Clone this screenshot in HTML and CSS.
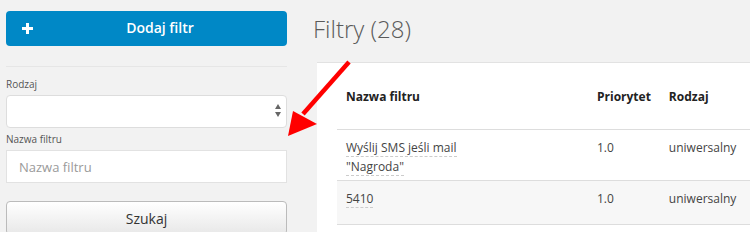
FILE: index.html
```html
<!DOCTYPE html>
<html lang="pl">
<head>
  <meta charset="UTF-8">
  <title>Filtry</title>
  <link rel="stylesheet" href="styles.css">
</head>
<body>
  <div class="page">
    <div class="sidebar">
      <button class="btn-add">
        <span class="plus"></span>
        <span class="btn-add-text">Dodaj filtr</span>
      </button>
      <div class="divider"></div>

      <label class="field-label">Rodzaj</label>
      <div class="select">
        <span class="select-arrows">
          <span class="arr-up"></span>
          <span class="arr-down"></span>
        </span>
      </div>

      <label class="field-label">Nazwa filtru</label>
      <input class="text-input" type="text" placeholder="Nazwa filtru">

      <button class="btn-search">Szukaj</button>
    </div>

    <div class="main">
      <h1 class="title">Filtry (28)</h1>
      <div class="panel">
        <table class="filters">
          <thead>
            <tr>
              <th class="col-name">Nazwa filtru</th>
              <th class="col-prio">Priorytet</th>
              <th>Rodzaj</th>
            </tr>
          </thead>
          <tbody>
            <tr class="row-a">
              <td><div class="name-wrap"><a class="flink">Wyślij SMS jeśli mail "Nagroda"</a></div></td>
              <td>1.0</td>
              <td>uniwersalny</td>
            </tr>
            <tr class="row-b">
              <td><div class="name-wrap"><a class="flink">5410</a></div></td>
              <td>1.0</td>
              <td>uniwersalny</td>
            </tr>
          </tbody>
        </table>
      </div>
    </div>
  </div>

  <svg class="arrow" width="80" height="90" viewBox="0 0 80 90">
    <line x1="70" y1="2" x2="24" y2="54" stroke="#ff0000" stroke-width="4.5"/>
    <polygon points="9,76 14,51 38,64" fill="#ff0000"/>
  </svg>
</body>
</html>
```

FILE: styles.css
```css
body{
  margin: 0;
  background-color: #f2f2f2;
  font-family: "Open Sans", "Liberation Sans", sans-serif;
  color: #333333;
  height: 232px;
  overflow: hidden;
  position: relative;
}

.page{
  display: flex;
}

.sidebar{
  width: 281px;
  padding-left: 6px;
  padding-top: 11px;
  display: flex;
  flex-direction: column;
}

.btn-add{
  height: 35px;
  border: none;
  border-radius: 4px;
  background-color: #0088c6;
  color: #ffffff;
  font-family: inherit;
  font-size: 14px;
  font-weight: 600;
  display: flex;
  align-items: center;
  padding: 0;
}

.plus{
  width: 11px;
  height: 11px;
  margin-left: 16px;
  position: relative;
}

.plus::before,
.plus::after{
  content: "";
  position: absolute;
  background-color: #ffffff;
}

.plus::before{
  left: 0;
  top: 4px;
  width: 11px;
  height: 3px;
}

.plus::after{
  left: 4px;
  top: 0;
  width: 3px;
  height: 11px;
}

.btn-add-text{
  flex: 1;
  text-align: center;
  padding-bottom: 2px;
}

.divider{
  height: 1px;
  background-color: #e6e6e6;
  margin-top: 20px;
  margin-bottom: 10px;
}

.field-label{
  font-size: 10px;
  color: #555555;
  line-height: 14px;
  margin-bottom: 4px;
}

.select{
  height: 31px;
  background-color: #ffffff;
  border: 1px solid #dddddd;
  border-radius: 4px;
  position: relative;
  margin-bottom: 4px;
}

.select-arrows{
  position: absolute;
  right: 5px;
  top: 8px;
  display: flex;
  flex-direction: column;
  gap: 3px;
}

.arr-up{
  width: 0;
  height: 0;
  border-left: 3.5px solid transparent;
  border-right: 3.5px solid transparent;
  border-bottom: 5px solid #666666;
}

.arr-down{
  width: 0;
  height: 0;
  border-left: 3.5px solid transparent;
  border-right: 3.5px solid transparent;
  border-top: 5px solid #666666;
}

.text-input{
  height: 33px;
  box-sizing: border-box;
  border: 1px solid #e2e2e2;
  background-color: #ffffff;
  padding: 0 12px;
  font-family: inherit;
  font-size: 13px;
  color: #333333;
}

.text-input::placeholder{
  color: #9a9a9a;
}

.btn-search{
  margin-top: 18px;
  height: 34px;
  border: 1px solid #bbbbbb;
  border-radius: 4px;
  background: linear-gradient(#ffffff, #e8e8e8);
  font-family: inherit;
  font-size: 14px;
  color: #333333;
  padding: 0;
}

.main{
  flex: 1;
  padding-left: 30px;
}

.title{
  margin: 0;
  margin-left: -4px;
  font-size: 24px;
  font-weight: 300;
  color: #5a5a5a;
  height: 62px;
  line-height: 58px;
}

.panel{
  background-color: #ffffff;
  border-top: 1px solid #e2e2e2;
  padding-left: 20px;
  height: 200px;
}

.filters{
  width: 100%;
  border-collapse: collapse;
  font-size: 12px;
}

.filters th{
  text-align: left;
  font-weight: 700;
  color: #222222;
  height: 65px;
  padding: 0 9px;
  padding-top: 1px;
  border-bottom: 1px solid #dddddd;
}

.col-name{
  width: 233px;
}

.col-prio{
  width: 53px;
}

.filters td{
  vertical-align: top;
  padding: 8px 9px 0 9px;
  line-height: 19px;
  color: #444444;
  border-bottom: 1px solid #dddddd;
}

.row-a td{
  height: 42px;
}

.row-b td{
  height: 35px;
}

.row-b{
  background-color: #f7f7f7;
}

.name-wrap{
  width: 125px;
}

.flink{
  color: #444444;
  border-bottom: 1px dashed #cccccc;
  text-decoration: none;
}

.arrow{
  position: absolute;
  left: 279px;
  top: 60px;
}
```
